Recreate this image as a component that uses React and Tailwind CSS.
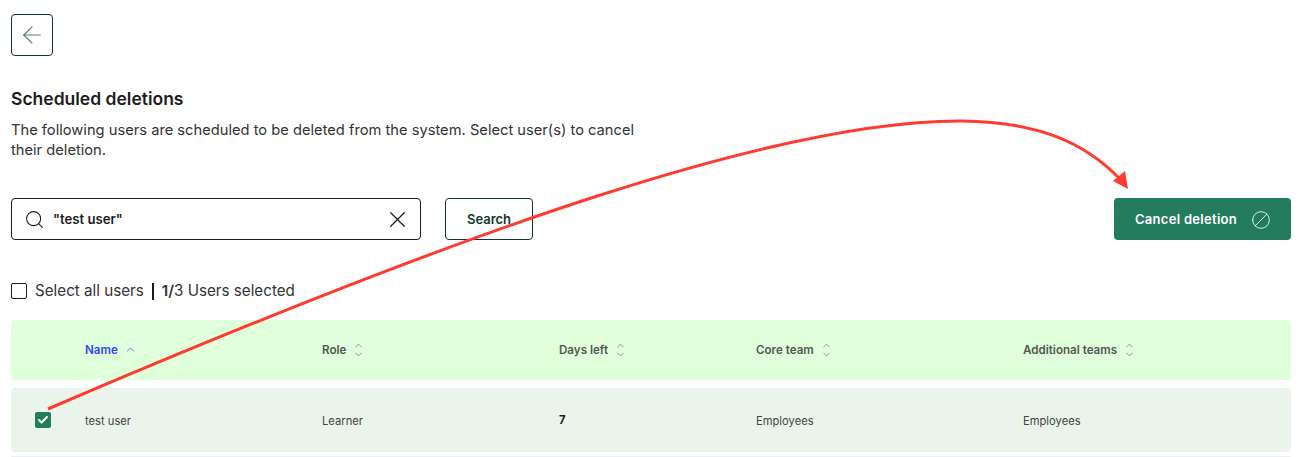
import React from 'react';
import { ArrowLeft, Search, X, ChevronUp, ChevronDown, Check, Ban } from 'lucide-react';

const columns = [
    { label: 'Role', width: 'w-[237px]' },
    { label: 'Days left', width: 'w-[197px]' },
    { label: 'Core team', width: 'w-[267px]' },
    { label: 'Additional teams', width: 'flex-1' },
];

const SortIcon = () => (
    <span className="flex flex-col items-center text-[#555]">
        <ChevronUp size={11} strokeWidth={1.25} className="-mb-[1px]" />
        <ChevronDown size={11} strokeWidth={1.25} className="-mt-[1px]" />
    </span>
);

export default function App() {
    return (
        <div className="relative h-[457px] overflow-hidden bg-white pl-[11px] pr-[14px] pt-[14px] text-[#1c1c1c] font-['Inter',sans-serif]">
            {/* Back button */}
            <button className="flex h-[42px] w-[42px] items-center justify-center rounded-[4px] border border-[#12372a] text-[#5d7a70]">
                <ArrowLeft size={28} strokeWidth={1} />
            </button>

            {/* Heading */}
            <h1 className="mt-[31px] text-[17.5px] font-semibold leading-[24px]">Scheduled deletions</h1>
            <p className="mt-[9px] w-[640px] text-[14.7px] leading-[20px] text-[#333]">
                The following users are scheduled to be deleted from the system. Select user(s) to cancel their deletion.
            </p>

            {/* Search row */}
            <div className="mt-[38px] flex items-center">
                <div className="flex h-[42px] w-[410px] items-center rounded-[4px] border border-[#1c1c1c] pl-[12px] pr-[9px]">
                    <Search size={21} strokeWidth={1.2} />
                    <span className="ml-[8px] flex-1 pt-[1px] text-[13.2px] font-semibold">"test user"</span>
                    <X size={27} strokeWidth={1.1} />
                </div>
                <button className="ml-[24px] h-[42px] w-[88px] rounded-[4px] border border-[#12372a] pt-[1px] text-[13px] font-semibold text-[#12372a]">
                    Search
                </button>
                <button className="ml-auto flex h-[42px] w-[177px] items-center justify-center gap-[14px] rounded-[4px] bg-[#247c5e] pt-[1px] pl-[1px] text-[13px] font-semibold tracking-[0.3px] text-white">
                    Cancel deletion
                    <Ban size={20} strokeWidth={1} className="-scale-x-100" />
                </button>
            </div>

            {/* Select all */}
            <div className="mt-[42px] flex h-[18px] items-center text-[15.2px] text-[#333]">
                <span className="h-[16px] w-[16px] rounded-[2px] border border-[#1c1c1c]" />
                <span className="ml-[8px]">Select all users</span>
                <span className="mx-[8px] h-[17px] w-[2px] bg-[#1c1c1c]" />
                <span><span className="font-semibold">1/</span>3 Users selected</span>
            </div>

            {/* Table header */}
            <div className="mt-[20px] flex h-[60px] items-center rounded-[4px] bg-[#e0ffdb] pl-[74px] text-[11.6px] font-semibold text-[#555]">
                <div className="flex w-[237px] items-center gap-[6px] text-[#2f45ff]">
                    <span className="pt-[1px]">Name</span>
                    <ChevronUp size={13} strokeWidth={1.25} />
                </div>
                {columns.map((col) => (
                    <div key={col.label} className={`flex items-center gap-[7px] ${col.width}`}>
                        <span className="pt-[1px]">{col.label}</span>
                        <SortIcon />
                    </div>
                ))}
            </div>

            {/* Table row */}
            <div className="mt-[8px] flex h-[64px] items-center rounded-[4px] bg-[#eaf4eb] pl-[24px] text-[11.2px] text-[#444]">
                <span className="flex h-[16px] w-[16px] items-center justify-center rounded-[2px] bg-[#247c5e] text-white">
                    <Check size={12} strokeWidth={4} />
                </span>
                <div className="ml-[34px] w-[237px] pt-[3px]">test user</div>
                <div className="w-[237px] pt-[3px]">Learner</div>
                <div className="w-[197px] font-bold text-[#1c1c1c]">7</div>
                <div className="w-[267px] pt-[3px]">Employees</div>
                <div className="flex-1 pt-[3px]">Employees</div>
            </div>
            <div className="mt-[4px] h-[2px] rounded-[4px] bg-[#eeeeee]" />

            {/* Annotation arrow */}
            <svg className="pointer-events-none absolute left-0 top-0" width="1305" height="457" viewBox="0 0 1305 457" fill="none">
                <path d="M48 409 C 470 228, 780 120, 962 121 C 1040 122, 1085 143, 1120 179" stroke="#ff3b2f" strokeWidth="3" />
                <path d="M1128 189 L1113 181 L1125 171 Z" fill="#ff3b2f" />
            </svg>
        </div>
    );
}
